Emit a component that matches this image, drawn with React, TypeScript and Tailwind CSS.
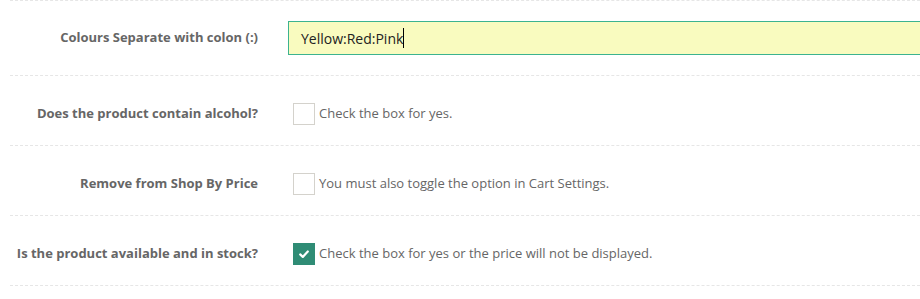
import React from 'react';

const ROWS = [
  { label: 'Does the product contain alcohol?', checked: false, help: 'Check the box for yes.' },
  { label: 'Remove from Shop By Price', checked: false, help: 'You must also toggle the option in Cart Settings.' },
  { label: 'Is the product available and in stock?', checked: true, help: 'Check the box for yes or the price will not be displayed.' },
];

function Check({ checked }: { checked: boolean }) {
  if (checked) {
    return (
      <span className="w-[22px] h-[22px] bg-[#2f8c75] flex items-center justify-center flex-shrink-0">
        <svg className="w-[12px] h-[12px]" viewBox="0 0 12 12" fill="none" stroke="white" strokeWidth={2.2} strokeLinecap="round" strokeLinejoin="round">
          <path d="M2.2 6.4l2.6 2.5 5-5.4" />
        </svg>
      </span>
    );
  }
  return <span className="w-[22px] h-[22px] bg-white border border-[#d4d2cc] flex-shrink-0" />;
}

export default function App() {
  return (
    <div className="w-[920px] h-[299px] bg-white overflow-hidden" style={{ fontFamily: '"Open Sans", sans-serif' }}>
      <div className="ml-[10px] border-t border-dashed border-[#e6e6e6]">
        {/* Colours text field */}
        <div className="h-[75px] flex items-center border-b border-dashed border-[#e6e6e6]">
          <div className="w-[248px] text-right text-[13px] font-bold text-[#666]">Colours Separate with colon (:)</div>
          <div className="ml-[30px] flex-1 -mr-[10px] h-[34px] bg-[#f9fbbf] border border-[#3cb38f] border-r-0 flex items-center pl-[12px] text-[14px] text-[#222]">
            Yellow:Red:Pink<span className="inline-block w-px h-[20px] bg-black" />
          </div>
        </div>

        {ROWS.map(r => (
          <div key={r.label} className="h-[70px] pt-[6px] flex items-center border-b border-dashed border-[#e6e6e6]">
            <div className="w-[248px] text-right text-[13px] font-bold text-[#666]">{r.label}</div>
            <div className="ml-[35px] flex items-center gap-[4px]">
              <Check checked={r.checked} />
              <span className="text-[13px] text-[#666]">{r.help}</span>
            </div>
          </div>
        ))}
      </div>
    </div>
  );
}
